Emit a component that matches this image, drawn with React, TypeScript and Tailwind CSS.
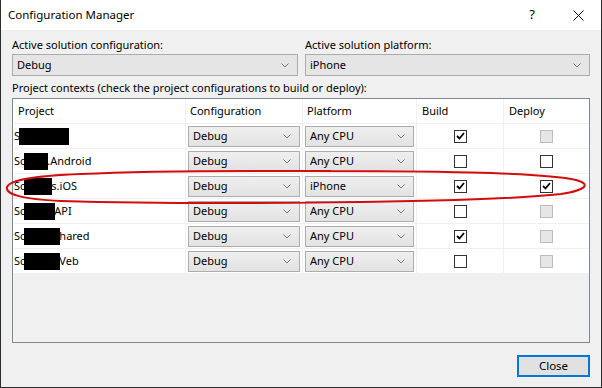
import { ReactNode } from 'react';

type Row = {
  head: string;
  hidden: number;
  tail: string;
  platform: string;
  build: boolean;
  deploy: 'on' | 'off' | 'disabled';
};

const rows: Row[] = [
  { head: 'S', hidden: 50, tail: '', platform: 'Any CPU', build: true, deploy: 'disabled' },
  { head: 'Sc', hidden: 24, tail: '.Android', platform: 'Any CPU', build: false, deploy: 'off' },
  { head: 'Sc', hidden: 28, tail: 's.iOS', platform: 'iPhone', build: true, deploy: 'on' },
  { head: 'Sc', hidden: 31, tail: 'API', platform: 'Any CPU', build: false, deploy: 'disabled' },
  { head: 'Sc', hidden: 36, tail: 'hared', platform: 'Any CPU', build: true, deploy: 'disabled' },
  { head: 'Sc', hidden: 36, tail: 'Veb', platform: 'Any CPU', build: false, deploy: 'disabled' },
];

function Chevron() {
  return (
    <svg width="8" height="5" viewBox="0 0 8 5" className="shrink-0">
      <path d="M0.5 0.5 L4 4 L7.5 0.5" fill="none" stroke="#7a7a7a" strokeWidth="1" />
    </svg>
  );
}

function CellSelect({ value }: { value: string }) {
  return (
    <div className="mx-[2px] flex h-[21px] items-center justify-between border border-[#acacac] bg-gradient-to-b from-[#efefef] to-[#e2e2e2] pl-[4px] pr-[8px]">
      <span>{value}</span>
      <Chevron />
    </div>
  );
}

function CheckBox({ state }: { state: 'on' | 'off' | 'disabled' }) {
  if (state === 'disabled') {
    return <div className="h-[13px] w-[13px] border border-[#bcbcbc] bg-[#e6e6e6]" />;
  }
  return (
    <div className="flex h-[13px] w-[13px] items-center justify-center border border-[#333333] bg-white">
      {state === 'on' && (
        <svg width="9" height="8" viewBox="0 0 9 8">
          <path d="M1 4 L3.5 6.5 L8 1" fill="none" stroke="#000" strokeWidth="1.8" />
        </svg>
      )}
    </div>
  );
}

function Cell({ children, className = '' }: { children: ReactNode; className?: string }) {
  return (
    <div className={`flex h-[25px] items-center border-b border-r border-[#f0f0f0] ${className}`}>
      {children}
    </div>
  );
}

export default function App() {
  return (
    <div
      className="relative flex h-[388px] w-[602px] flex-col border-x border-b border-[#2d2d2d] bg-[#f0f0f0] text-[11px] text-black"
      style={{ fontFamily: '"Noto Sans", sans-serif' }}
    >
      {/* title bar */}
      <div className="flex h-[30px] shrink-0 items-center justify-between bg-white pl-[7px]">
        <span className="text-[11.5px]">Configuration Manager</span>
        <div className="flex items-center">
          <span className="w-[46px] text-center text-[13px]">?</span>
          <span className="flex w-[46px] justify-center">
            <svg width="11" height="11" viewBox="0 0 11 11">
              <path d="M0.5 0.5 L10.5 10.5 M10.5 0.5 L0.5 10.5" stroke="#111" strokeWidth="1" />
            </svg>
          </span>
        </div>
      </div>

      <div className="flex flex-1 flex-col px-[11px] pt-[6px]">
        {/* solution selects */}
        <div className="flex gap-[7px]">
          <div className="flex w-[287px] flex-col">
            <span className="h-[18px] leading-[18px]">Active solution configuration:</span>
            <div className="flex h-[22px] items-center justify-between border border-[#acacac] bg-[#e5e5e5] pl-[4px] pr-[8px]">
              <span>Debug</span>
              <Chevron />
            </div>
          </div>
          <div className="flex w-[286px] flex-col">
            <span className="h-[18px] leading-[18px]">Active solution platform:</span>
            <div className="flex h-[22px] items-center justify-between border border-[#acacac] bg-[#e5e5e5] pl-[4px] pr-[8px]">
              <span>iPhone</span>
              <Chevron />
            </div>
          </div>
        </div>

        <span className="mt-[2px] h-[20px] leading-[20px]">
          Project contexts (check the project configurations to build or deploy):
        </span>

        {/* project grid */}
        <div className="h-[245px] w-[578px] border border-[#828790] bg-[#f0f0f0]">
          <div className="grid grid-cols-[173px_117px_114px_87px_85px] bg-white">
            <Cell className="pl-[5px]">Project</Cell>
            <Cell className="pl-[4px]">Configuration</Cell>
            <Cell className="pl-[4px]">Platform</Cell>
            <Cell className="pl-[5px]">Build</Cell>
            <Cell className="border-r-0 pl-[5px]">Deploy</Cell>

            {rows.map((r, i) => (
              <div key={i} className="contents">
                <Cell className="pl-[1px]">
                  <span>{r.head}</span>
                  <span className="mx-[-1px] h-[17px] bg-black" style={{ width: r.hidden }} />
                  <span>{r.tail}</span>
                </Cell>
                <Cell>
                  <div className="w-full">
                    <CellSelect value="Debug" />
                  </div>
                </Cell>
                <Cell>
                  <div className="w-full">
                    <CellSelect value={r.platform} />
                  </div>
                </Cell>
                <Cell className="justify-center">
                  <CheckBox state={r.build ? 'on' : 'off'} />
                </Cell>
                <Cell className="justify-center border-r-0">
                  <CheckBox state={r.deploy} />
                </Cell>
              </div>
            ))}
          </div>
        </div>

        <div className="mt-[12px] flex justify-end">
          <button className="h-[22px] w-[73px] border-2 border-[#0078d7] bg-[#e1e1e1] text-[11.5px] leading-none">
            Close
          </button>
        </div>
      </div>

      {/* red annotation ellipse */}
      <svg className="pointer-events-none absolute left-0 top-0" width="602" height="388">
        <path
          d="M300 171 C420 171 540 172 575 180 C590 184 586 190 560 194 C480 203 200 205 60 201 C20 199 4 194 6 187 C9 180 30 176 80 174 C160 170 260 171 330 171"
          fill="none"
          stroke="#d10d0d"
          strokeWidth="2"
        />
      </svg>
    </div>
  );
}
